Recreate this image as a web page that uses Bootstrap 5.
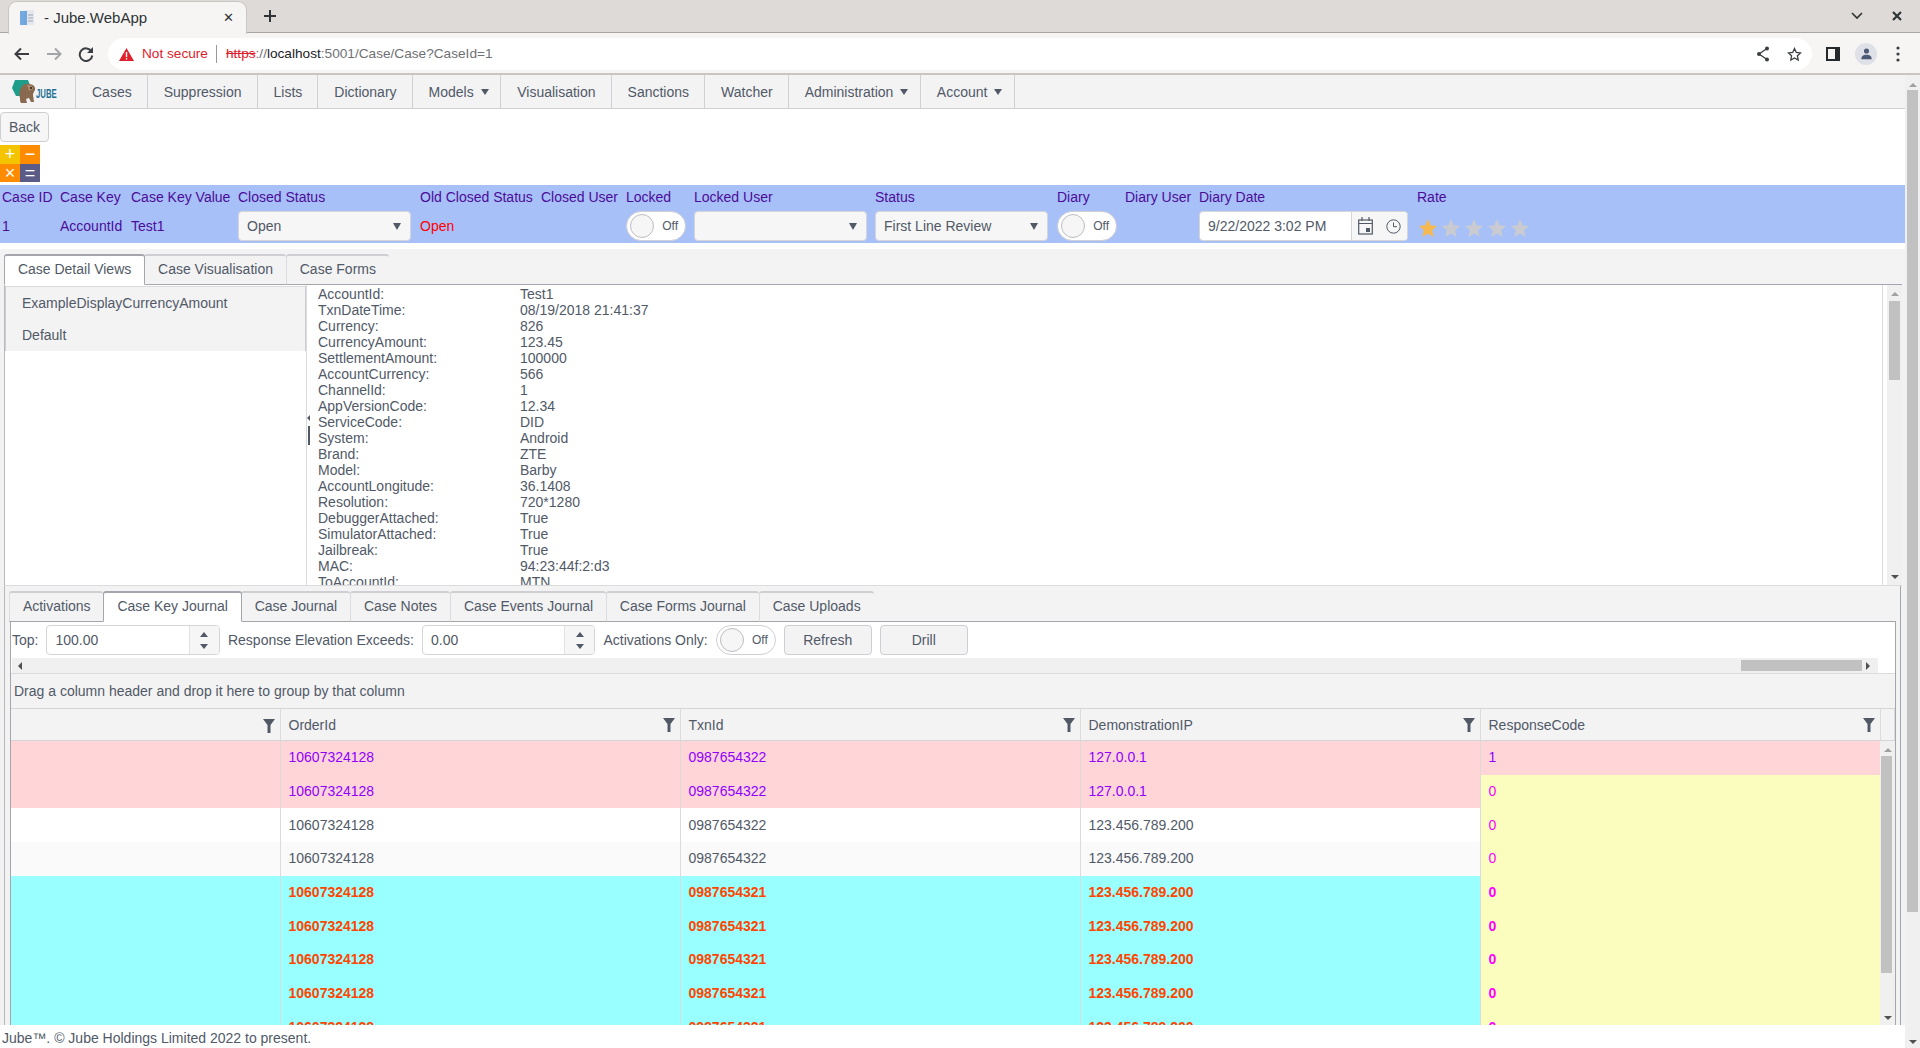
<!DOCTYPE html>
<html lang="en">
<head>
<meta charset="utf-8">
<title>- Jube.WebApp</title>
<link rel="stylesheet" href="https://cdn.jsdelivr.net/npm/bootstrap@5.3.0/dist/css/bootstrap.min.css">
<style>
html,body{height:1048px;overflow:hidden;margin:0;background:#fff}
body{font-family:"Liberation Sans",Arial,sans-serif;font-size:14px;color:#515967;line-height:1.2}
.tabstrip-os{height:33px;background:#dedad7;position:relative;padding-left:8px;border-bottom:1px solid #a8a5a2}
.ostab{width:239px;height:33px;margin-top:1px;background:#f6f5f4;border-radius:9px 9px 0 0;border:1px solid #c9c5c1;border-bottom:0;padding:0 11px;color:#2e3436;font-size:15px;gap:9px;position:relative;z-index:1}
.ostab-x{margin-left:auto;font-size:13px;width:14px;text-align:center}
.osplus{margin-left:15px;width:16px;height:16px}
.oswin{margin-left:auto;gap:27px;padding-right:17px}
.ostool{height:42px;background:#f6f5f4;border-bottom:2px solid #c9c5c2;padding:2px 0 0 6px}
.osnav{width:32px;height:16px;text-align:center;flex:none}
.urlbar{margin-left:6px;width:1704px;height:32px;background:#fff;border-radius:16px;padding:0 10px 0 11px;font-size:13.65px;color:#6e7074}
.url-warn{color:#e0212b;margin-left:8px;margin-right:8px}
.url-sep{width:1px;height:18px;background:#9a9a9a;margin-right:9px}
.url-s{color:#e0212b;text-decoration:line-through}
.url-h{color:#202124}
.url-icons{margin-left:auto;gap:17px}
.ostool-r{gap:15px;margin-left:14px}
.avatar-o{width:22px;height:22px;border-radius:50%;background:#dfe1e8;flex:none}
.dots-o{margin-left:4px}
.app-row{height:973px}
.app-main{width:1905px;flex:none;height:973px;overflow:hidden}
.pagebar{width:15px;flex:none;background:#f0f0f0;position:relative;height:973px}
.pagebar-thumb{width:11px;margin-left:2px;height:822px;margin-top:15px;background:#c1c1c1}
.arr{width:0;height:0;border-style:solid;flex:none}
.arr-u{border-width:0 4px 4px;border-color:transparent transparent #a0a0a0}
.arr-d{border-width:4px 4px 0;border-color:#505050 transparent transparent}
.arr-l{border-width:4px 4px 4px 0;border-color:transparent #505050 transparent transparent}
.arr-r{border-width:4px 0 4px 4px;border-color:transparent transparent transparent #505050}
.arr-cap{border-width:6px 4px 0;border-color:#515967 transparent transparent}
.arr-sel{border-width:7px 4px 0;border-color:#515967 transparent transparent}
.pagebar .arr-u{position:absolute;left:4px;top:8px}
.pagebar .arr-d{position:absolute;left:4px;top:965px}
.topnav{height:34px;background:#f3f3f4;border-bottom:1px solid #d0d0d3}
.topnav-logo{width:76px;border-right:1px solid #d0d0d3;padding-left:12px;height:33px;overflow:hidden}
.logo-t{display:inline-block;color:#1c6f92;font-weight:700;font-size:12.5px;transform:scaleX(.62);transform-origin:left center;margin-left:-1px;margin-top:5px}
.topnav-i{height:33px;padding:1px 15px 0 16px;border-right:1px solid #d0d0d3;gap:8px;white-space:nowrap}
.topnav-m{gap:7px;padding-right:11.5px}
.backbar{padding-top:3px;height:33px}
.backbtn{--bs-btn-padding-x:7px;--bs-btn-padding-y:0;--bs-btn-font-size:14px;--bs-btn-color:#515967;--bs-btn-bg:#f6f6f6;--bs-btn-border-color:#cfcfd3;--bs-btn-hover-color:#515967;--bs-btn-hover-bg:#eee;--bs-btn-border-radius:4px;height:30px;width:49px;line-height:28px}
.calc{width:40px;height:37px;margin-top:3px;grid-template-columns:20px 20px;grid-template-rows:18.5px 18.5px;display:grid;color:#fff;font-size:18px;line-height:18px;text-align:center}
.c-y{background:#f5c400}.c-o{background:#ff8c00}.c-i{background:#5b5b87}
.casebar{height:58px;margin-top:3px;background:#a8c0f8;color:#4b0c98;display:grid;grid-template-columns:58px 71px 107px 182px 121px 85px 68px 181px 182px 68px 74px 218px 1fr;grid-template-rows:26px 32px;padding-left:2px}
.casebar>div{white-space:nowrap}
.cb-l{align-self:center;padding-bottom:2px}
.cb-v{align-self:center;padding-bottom:2px}
.cb-f{align-self:start}
.cb-red{color:#ff0000}
.selbox{width:173px;height:30px;background:#f6f6f6;border:1px solid #d5d5d8;border-radius:4px;padding:0 9px 0 8px;color:#515967;justify-content:space-between}
.swbox{width:60px;height:30px;background:#fff;border:1px solid #cfcfd3;border-radius:15px;padding:0 7px 0 3px;color:#515967;font-size:12px;justify-content:space-between}
.swknob{width:24px;height:24px;border-radius:50%;background:#f6f6f6;border:1px solid #bdbdc2}
.datebox{width:209px;height:30px;background:#fff;border:1px solid #d5d5d8;border-radius:4px;overflow:hidden;color:#515967}
.date-t{width:152px;padding-left:8px;border-right:1px solid #d5d5d8;height:100%}
.date-b{flex:1;background:#f6f6f6;height:100%;justify-content:space-around}
.stars{gap:5px;padding-top:8px;margin-left:2px}
.strip{height:36px;margin-top:6px;background:#f3f3f4;padding:5px 0 0 4px}
.strip2{height:36px;background:#f3f3f4;padding:5px 0 0 9px}
.tabi{height:31px;padding:0 12.9px 2px;background:#f3f3f4;border:1px solid #dbdbde;border-top:2px solid #cfcfd3;border-right:0;border-bottom:1px solid #a5a5ad;border-radius:3px 3px 0 0;display:flex;align-items:center;color:#515967;white-space:nowrap}
.tabi:last-of-type{border-right:1px solid #dbdbde}
.tabi.on{background:#fff;border-top:2px solid #a5a5ad;border-bottom-color:#fff;border-left-color:#a5a5ad;border-right:1px solid #a5a5ad;margin-right:-1px;position:relative;z-index:1}
.striprest{flex:1;border-bottom:1px solid #a5a5ad;height:31px}
.strip .striprest{margin-right:3px}
.strip2 .striprest{margin-right:4px}
.workarea{background:#f2f2f2}
.detailwrap{height:301px;border-left:1px solid #b8b8bd;margin-left:4px;margin-right:3px;background:#fff;border-bottom:1px solid #dbdbde}
.leftpane{width:301px;flex:none}
.leftlist{--bs-list-group-bg:#f3f3f4;--bs-list-group-color:#515967;--bs-list-group-border-width:0;--bs-list-group-border-radius:0;--bs-list-group-item-padding-y:0;--bs-list-group-item-padding-x:16px;margin-top:1px;height:65px;background:#f3f3f4;border:1px solid #cdcdd1;border-top-color:#dbdbde}
.leftlist .list-group-item{height:32px;line-height:32px}
.splitter{width:4px;flex:none;border-left:1px solid #dbdbde;position:relative}
.splitter-h{position:absolute;left:1px;top:141px;width:2px;height:19px;background:#515967}
.splitter-a{position:absolute;left:0;top:130px;border-width:3px 3px 3px 0;border-color:transparent #515967 transparent transparent}
.detailtext{flex:1;padding:1px 0 0 8px;border-right:1px solid #dbdbde;overflow:hidden;min-width:0;height:300px;margin-right:4px}
.drow{height:16px;line-height:16px;white-space:nowrap}
.dk{width:202px;flex:none}
.vbar{width:15px;flex:none;background:#f0f0f0;position:relative}
.vbar .arr-u{position:absolute;left:4px;top:7px}
.vbar .arr-d{position:absolute;left:4px;bottom:6px}
.vthumb{position:absolute;left:1px;width:11px;background:#c1c1c1}
.d-thumb{top:16px;height:79px;left:2px}
.g-thumb{top:15px;height:217px}
.lower{height:439px;margin-left:4px;width:1897px;border-left:1px solid #b8b8bd;border-right:1px solid #a5a5ad;background:#f3f3f4}
.lowerpanel{margin-left:5px;width:1886px;border-left:1px solid #a5a5ad;border-right:1px solid #a5a5ad;background:#fff;height:403px;overflow:hidden}
.tb{height:36px;padding:0 0 0 1px;gap:8px;white-space:nowrap}
.numbox{width:173.5px;height:30px;border:1px solid #d5d5d8;border-radius:4px;overflow:hidden;background:#fff}
.num-t{flex:1;padding-left:8px}
.num-s{width:30px;height:100%;background:#f6f6f6;border-left:1px solid #e2e2e4;gap:7px;justify-content:center}
.num-s .arr-u{border-bottom-color:#515967;border-width:0 4px 5px}
.num-s .arr-d{border-top-color:#515967;border-width:5px 4px 0}
.tbbtn{--bs-btn-padding-x:0;--bs-btn-padding-y:0;--bs-btn-font-size:14px;--bs-btn-color:#515967;--bs-btn-bg:#f3f3f4;--bs-btn-border-color:#cfcfd3;--bs-btn-border-radius:4px;--bs-btn-hover-color:#515967;--bs-btn-hover-bg:#eee;width:88px;height:30px;line-height:28px}
.hbar{height:15px;background:#f0f0f0;width:1866px;margin-left:1px;padding:0 6px;position:relative}
.hthumb{position:absolute;left:1729px;top:2px;width:121px;height:11px;background:#c1c1c1}
.hbar .arr-r{margin-left:auto;margin-right:2px}
.gridouter{height:352px;background:#f3f3f4;border-top:1px solid #dbdbde;overflow:hidden}
.grouphint{height:35px;padding-left:3px;border-bottom:1px solid #d5d5d8}
.gridtab{table-layout:fixed;width:1869px;margin:0;--bs-table-bg:transparent;--bs-table-color:#515967;--bs-table-border-color:#dbdbde;border-collapse:collapse}
.gridtab td,.gridtab th{padding:0 8px;border:0;border-right:1px solid #dbdbde;font-weight:400;white-space:nowrap;vertical-align:middle}
.c0{width:269px}.cx{width:400px}
.headrow{height:32px;border-bottom:1px solid #d5d5d8}
.gridtab.headtab{width:100%;background:#f3f3f4}
.gridtab.headtab th{background:#f3f3f4;height:31px;box-shadow:none;padding:2px 5px 0 8px}
.headcell{justify-content:space-between}
.gridbody{background:#fff;height:285px;overflow:hidden}
.gridtab.bodytab tr{height:33.67px}
.gridtab.bodytab td{height:33.67px;box-shadow:none}
.rp td{background:#ffd5d7;color:#8f00ff}
.rw td{background:#fff;color:#515967}
.rg td{background:#fafafa;color:#515967}
.rc td{background:#99ffff;color:#ff4500;font-weight:700}
.gridtab td.cy{background:#fafdbd;color:#ff00ff;border-right:0}
.gridtab td.cr{background:#ffd5d7;color:#8f00ff;border-right:0}
.footline{height:23px;padding-left:2px;background:#fff;color:#515967;line-height:26px;white-space:nowrap;flex:none;overflow:hidden}
.midstack{height:950px;overflow:hidden;flex:none}
</style>
</head>
<body>
<div class="tabstrip-os d-flex align-items-start">
  <div class="ostab d-flex align-items-center">
    <svg width="15" height="16" viewBox="0 0 15 16"><rect x="4" y="0" width="10" height="15" fill="#e4e8ee"/><rect x="0" y="1" width="7" height="14" fill="#4a90d9" opacity=".75"/><path d="M8 5h5M8 8h5M8 11h5" stroke="#9aa4b2"/></svg>
    <span>- Jube.WebApp</span>
    <span class="ostab-x">&#10005;</span>
  </div>
  <svg class="osplus align-self-center" viewBox="0 0 16 16"><path d="M8 2v12M2 8h12" stroke="#2e3436" stroke-width="2"/></svg>
  <div class="oswin d-flex align-items-center align-self-center">
    <svg width="14" height="10" viewBox="0 0 14 10"><path d="M2 2l5 5 5-5" fill="none" stroke="#2e3436" stroke-width="1.6"/></svg>
    <svg width="12" height="12" viewBox="0 0 12 12"><path d="M2 2l8 8M10 2l-8 8" fill="none" stroke="#2e3436" stroke-width="2.2"/></svg>
  </div>
</div>
<div class="ostool d-flex align-items-center">
  <svg class="osnav" viewBox="0 0 32 16"><path d="M23 8H10M15 2.500L9.500 8l5.500 5.500" fill="none" stroke="#3a3d41" stroke-width="2"/></svg>
  <svg class="osnav" viewBox="0 0 32 16"><path d="M9 8h13M17 2.500L22.500 8 17 13.500" fill="none" stroke="#a3a5a8" stroke-width="2"/></svg>
  <svg class="osnav" viewBox="0 0 32 16"><path d="M21.500 5.500A6.300 6.300 0 1 0 22.300 9.500" fill="none" stroke="#3a3d41" stroke-width="2"/><path d="M23 1v6h-6z" fill="#3a3d41"/></svg>
  <div class="urlbar d-flex align-items-center">
    <svg width="15" height="13" viewBox="0 0 15 13"><path d="M7.500 0L15 13H0z" fill="#e0212b"/><path d="M6.800 4h1.400v5H6.800zM6.800 10h1.400v1.500H6.800z" fill="#fff"/></svg>
    <span class="url-warn">Not secure</span><span class="url-sep"></span>
    <span><span class="url-s">https</span>://<span class="url-h">localhost</span>:5001/Case/Case?CaseId=1</span>
    <div class="url-icons d-flex align-items-center">
      <svg width="14" height="16" viewBox="0 0 14 16"><path d="M11 2.500L3 8l8 5.500" fill="none" stroke="#3a3d41" stroke-width="1.300"/><circle cx="11" cy="2.500" r="2" fill="#3a3d41"/><circle cx="3" cy="8" r="2" fill="#3a3d41"/><circle cx="11" cy="13.500" r="2" fill="#3a3d41"/></svg>
      <svg width="15" height="15" viewBox="0 0 15 15"><path d="M7.500 1.500l1.800 3.900 4.200.5-3.100 2.900.8 4.200-3.700-2.100-3.700 2.100.8-4.200L1.500 5.900l4.200-.5z" fill="none" stroke="#3a3d41" stroke-width="1.300"/></svg>
    </div>
  </div>
  <div class="ostool-r d-flex align-items-center">
    <svg width="14" height="14" viewBox="0 0 14 14"><rect x="1" y="1" width="12" height="12" fill="none" stroke="#26292c" stroke-width="2"/><rect x="9" y="1" width="4" height="12" fill="#26292c"/></svg>
    <div class="avatar-o d-flex align-items-center justify-content-center"><svg width="11" height="12" viewBox="0 0 12 14"><circle cx="6" cy="3.500" r="3" fill="#4d5a75"/><path d="M0 13c0-3.500 2.500-5 6-5s6 1.500 6 5z" fill="#4d5a75"/></svg></div>
    <svg class="dots-o" width="4" height="16" viewBox="0 0 4 16"><circle cx="2" cy="2" r="1.600" fill="#3a3d41"/><circle cx="2" cy="8" r="1.600" fill="#3a3d41"/><circle cx="2" cy="14" r="1.600" fill="#3a3d41"/></svg>
  </div>
</div>
<div class="app-row d-flex">
  <div class="app-main d-flex flex-column">
    <div class="midstack">
    <nav class="topnav d-flex">
      <div class="topnav-logo d-flex align-items-center">
        <svg class="flex-none" width="25" height="24" viewBox="0 0 25 24"><path d="M3 0h13l2 5-5 11H4L0 8z" fill="#1f9d8b"/><path d="M8 10c1-4 5-7 9-6 3 0 7 2 6 6-1 2-2 3-2 5l1 7h-3l-2-4-3 1 1 4H9c-1-1-1-3-1-5-1-3-1-5 0-8z" fill="#8a6a4f"/><path d="M15 5c3-1 6 1 6 4l-4 2z" fill="#a98a6b"/><circle cx="19" cy="8" r="1" fill="#2c2016"/></svg>
        <span class="logo-t">JUBE</span>
      </div>
      <div class="topnav-i d-flex align-items-center">Cases</div>
      <div class="topnav-i d-flex align-items-center">Suppression</div>
      <div class="topnav-i d-flex align-items-center">Lists</div>
      <div class="topnav-i d-flex align-items-center">Dictionary</div>
      <div class="topnav-i topnav-m d-flex align-items-center">Models<span class="arr arr-cap"></span></div>
      <div class="topnav-i d-flex align-items-center">Visualisation</div>
      <div class="topnav-i d-flex align-items-center">Sanctions</div>
      <div class="topnav-i d-flex align-items-center">Watcher</div>
      <div class="topnav-i topnav-m d-flex align-items-center">Administration<span class="arr arr-cap"></span></div>
      <div class="topnav-i topnav-m d-flex align-items-center">Account<span class="arr arr-cap"></span></div>
    </nav>
    <div class="backbar"><button type="button" class="btn backbtn">Back</button></div>
    <div class="calc"><div class="c-y">+</div><div class="c-o">&minus;</div><div class="c-o">&times;</div><div class="c-i">=</div></div>
    <div class="casebar">
      <div class="cb-l">Case ID</div><div class="cb-l">Case Key</div><div class="cb-l">Case Key Value</div><div class="cb-l">Closed Status</div><div class="cb-l">Old Closed Status</div><div class="cb-l">Closed User</div><div class="cb-l">Locked</div><div class="cb-l">Locked User</div><div class="cb-l">Status</div><div class="cb-l">Diary</div><div class="cb-l">Diary User</div><div class="cb-l">Diary Date</div><div class="cb-l">Rate</div>
      <div class="cb-v">1</div><div class="cb-v">AccountId</div><div class="cb-v">Test1</div>
      <div class="cb-f"><div class="selbox d-flex align-items-center"><span>Open</span><span class="arr arr-sel"></span></div></div>
      <div class="cb-v cb-red">Open</div><div></div>
      <div class="cb-f"><div class="swbox d-flex align-items-center"><span class="swknob"></span><span>Off</span></div></div>
      <div class="cb-f"><div class="selbox d-flex align-items-center"><span></span><span class="arr arr-sel"></span></div></div>
      <div class="cb-f"><div class="selbox d-flex align-items-center"><span>First Line Review</span><span class="arr arr-sel"></span></div></div>
      <div class="cb-f"><div class="swbox d-flex align-items-center"><span class="swknob"></span><span>Off</span></div></div>
      <div></div>
      <div class="cb-f"><div class="datebox d-flex align-items-center"><div class="date-t d-flex align-items-center">9/22/2022 3:02 PM</div><div class="date-b d-flex align-items-center">
        <svg width="15" height="18" viewBox="0 0 15 18"><rect x=".7" y="3" width="13.600" height="14" fill="none" stroke="#515967" stroke-width="1.200"/><path d="M.7 6.500h13.600" stroke="#515967" stroke-width="1.200"/><path d="M4 0v4M11 0v4" stroke="#515967" stroke-width="1.200"/><rect x="8" y="11" width="4" height="4" fill="#515967"/></svg>
        <svg width="15" height="15" viewBox="0 0 15 15"><circle cx="7.500" cy="7.500" r="6.700" fill="none" stroke="#515967" stroke-width="1"/><path d="M7.500 3.500v4.200h3.500" fill="none" stroke="#515967"/></svg>
      </div></div></div>
      <div class="cb-f"><div class="stars d-flex">
        <svg width="18" height="18" viewBox="0 0 18 18"><path d="M9 0l2.600 6.300 6.400.6-4.800 4.300L14.600 18 9 14.400 3.400 18l1.400-6.800L0 6.900l6.400-.6z" fill="#f6b94f"/></svg>
        <svg width="18" height="18" viewBox="0 0 18 18"><path d="M9 0l2.600 6.300 6.400.6-4.800 4.300L14.600 18 9 14.400 3.400 18l1.400-6.800L0 6.900l6.400-.6z" fill="#c9cbd0"/></svg>
        <svg width="18" height="18" viewBox="0 0 18 18"><path d="M9 0l2.600 6.300 6.400.6-4.800 4.300L14.600 18 9 14.400 3.400 18l1.400-6.800L0 6.900l6.400-.6z" fill="#c9cbd0"/></svg>
        <svg width="18" height="18" viewBox="0 0 18 18"><path d="M9 0l2.600 6.300 6.400.6-4.800 4.300L14.600 18 9 14.400 3.400 18l1.400-6.800L0 6.900l6.400-.6z" fill="#c9cbd0"/></svg>
        <svg width="18" height="18" viewBox="0 0 18 18"><path d="M9 0l2.600 6.300 6.400.6-4.800 4.300L14.600 18 9 14.400 3.400 18l1.400-6.800L0 6.900l6.400-.6z" fill="#c9cbd0"/></svg>
      </div></div>
    </div>
    <div class="strip d-flex">
      <div class="tabi on">Case Detail Views</div><div class="tabi">Case Visualisation</div><div class="tabi">Case Forms</div><div class="striprest"></div>
    </div>
    <div class="workarea">
    <div class="detailwrap d-flex">
      <div class="leftpane">
        <div class="list-group leftlist">
          <div class="list-group-item">ExampleDisplayCurrencyAmount</div>
          <div class="list-group-item">Default</div>
        </div>
      </div>
      <div class="splitter"><span class="arr splitter-a"></span><span class="splitter-h"></span></div>
      <div class="detailtext">
        <div class="drow d-flex"><span class="dk">AccountId:</span><span>Test1</span></div>
        <div class="drow d-flex"><span class="dk">TxnDateTime:</span><span>08/19/2018 21:41:37</span></div>
        <div class="drow d-flex"><span class="dk">Currency:</span><span>826</span></div>
        <div class="drow d-flex"><span class="dk">CurrencyAmount:</span><span>123.45</span></div>
        <div class="drow d-flex"><span class="dk">SettlementAmount:</span><span>100000</span></div>
        <div class="drow d-flex"><span class="dk">AccountCurrency:</span><span>566</span></div>
        <div class="drow d-flex"><span class="dk">ChannelId:</span><span>1</span></div>
        <div class="drow d-flex"><span class="dk">AppVersionCode:</span><span>12.34</span></div>
        <div class="drow d-flex"><span class="dk">ServiceCode:</span><span>DID</span></div>
        <div class="drow d-flex"><span class="dk">System:</span><span>Android</span></div>
        <div class="drow d-flex"><span class="dk">Brand:</span><span>ZTE</span></div>
        <div class="drow d-flex"><span class="dk">Model:</span><span>Barby</span></div>
        <div class="drow d-flex"><span class="dk">AccountLongitude:</span><span>36.1408</span></div>
        <div class="drow d-flex"><span class="dk">Resolution:</span><span>720*1280</span></div>
        <div class="drow d-flex"><span class="dk">DebuggerAttached:</span><span>True</span></div>
        <div class="drow d-flex"><span class="dk">SimulatorAttached:</span><span>True</span></div>
        <div class="drow d-flex"><span class="dk">Jailbreak:</span><span>True</span></div>
        <div class="drow d-flex"><span class="dk">MAC:</span><span>94:23:44f:2:d3</span></div>
        <div class="drow d-flex"><span class="dk">ToAccountId:</span><span>MTN</span></div>
      </div>
      <div class="vbar"><span class="arr arr-u"></span><span class="vthumb d-thumb"></span><span class="arr arr-d"></span></div>
    </div>
    <div class="lower">
      <div class="strip2 d-flex ps-1">
        <div class="tabi">Activations</div><div class="tabi on">Case Key Journal</div><div class="tabi">Case Journal</div><div class="tabi">Case Notes</div><div class="tabi">Case Events Journal</div><div class="tabi">Case Forms Journal</div><div class="tabi">Case Uploads</div><div class="striprest"></div>
      </div>
      <div class="lowerpanel">
        <div class="tb d-flex align-items-center">
          <span>Top:</span>
          <div class="numbox d-flex align-items-center"><div class="num-t">100.00</div><div class="num-s d-flex flex-column align-items-center"><span class="arr arr-u"></span><span class="arr arr-d"></span></div></div>
          <span>Response Elevation Exceeds:</span>
          <div class="numbox d-flex align-items-center"><div class="num-t">0.00</div><div class="num-s d-flex flex-column align-items-center"><span class="arr arr-u"></span><span class="arr arr-d"></span></div></div>
          <span>Activations Only:</span>
          <div class="swbox d-flex align-items-center"><span class="swknob"></span><span>Off</span></div>
          <button type="button" class="btn tbbtn">Refresh</button>
          <button type="button" class="btn tbbtn">Drill</button>
        </div>
        <div class="hbar d-flex align-items-center"><span class="arr arr-l"></span><span class="hthumb"></span><span class="arr arr-r"></span></div>
        <div class="gridouter">
          <div class="grouphint d-flex align-items-center">Drag a column header and drop it here to group by that column</div>
          <div class="headrow">
            <table class="table gridtab headtab"><colgroup><col class="c0"><col class="cx"><col class="cx"><col class="cx"><col class="cx"><col></colgroup>
              <thead><tr>
                <th><div class="headcell d-flex align-items-center"><span></span><svg width="12" height="14" viewBox="0 0 12 14"><path d="M0 0h12L7.500 6v8h-3V6z" fill="#515967"/></svg></div></th>
                <th><div class="headcell d-flex align-items-center"><span>OrderId</span><svg width="12" height="14" viewBox="0 0 12 14"><path d="M0 0h12L7.500 6v8h-3V6z" fill="#515967"/></svg></div></th>
                <th><div class="headcell d-flex align-items-center"><span>TxnId</span><svg width="12" height="14" viewBox="0 0 12 14"><path d="M0 0h12L7.500 6v8h-3V6z" fill="#515967"/></svg></div></th>
                <th><div class="headcell d-flex align-items-center"><span>DemonstrationIP</span><svg width="12" height="14" viewBox="0 0 12 14"><path d="M0 0h12L7.500 6v8h-3V6z" fill="#515967"/></svg></div></th>
                <th><div class="headcell d-flex align-items-center"><span>ResponseCode</span><svg width="12" height="14" viewBox="0 0 12 14"><path d="M0 0h12L7.500 6v8h-3V6z" fill="#515967"/></svg></div></th>
                <th></th>
              </tr></thead>
            </table>
          </div>
          <div class="gridbody d-flex">
            <table class="table gridtab bodytab"><colgroup><col class="c0"><col class="cx"><col class="cx"><col class="cx"><col class="cx"></colgroup>
              <tbody>
                <tr class="rp"><td></td><td>10607324128</td><td>0987654322</td><td>127.0.0.1</td><td class="cr">1</td></tr>
                <tr class="rp"><td></td><td>10607324128</td><td>0987654322</td><td>127.0.0.1</td><td class="cy">0</td></tr>
                <tr class="rw"><td></td><td>10607324128</td><td>0987654322</td><td>123.456.789.200</td><td class="cy">0</td></tr>
                <tr class="rg"><td></td><td>10607324128</td><td>0987654322</td><td>123.456.789.200</td><td class="cy">0</td></tr>
                <tr class="rc"><td></td><td>10607324128</td><td>0987654321</td><td>123.456.789.200</td><td class="cy">0</td></tr>
                <tr class="rc"><td></td><td>10607324128</td><td>0987654321</td><td>123.456.789.200</td><td class="cy">0</td></tr>
                <tr class="rc"><td></td><td>10607324128</td><td>0987654321</td><td>123.456.789.200</td><td class="cy">0</td></tr>
                <tr class="rc"><td></td><td>10607324128</td><td>0987654321</td><td>123.456.789.200</td><td class="cy">0</td></tr>
                <tr class="rc"><td></td><td>10607324128</td><td>0987654321</td><td>123.456.789.200</td><td class="cy">0</td></tr>
              </tbody>
            </table>
            <div class="vbar"><span class="arr arr-u"></span><span class="vthumb g-thumb"></span><span class="arr arr-d"></span></div>
          </div>
        </div>
      </div>
    </div>
    </div>
    </div>
    <div class="footline">Jube&trade;. &copy; Jube Holdings Limited 2022 to present.</div>
  </div>
  <div class="pagebar"><span class="arr arr-u"></span><div class="pagebar-thumb"></div><span class="arr arr-d"></span></div>
</div>
<script src="https://cdn.jsdelivr.net/npm/bootstrap@5.3.0/dist/js/bootstrap.bundle.min.js"></script>
</body>
</html>
